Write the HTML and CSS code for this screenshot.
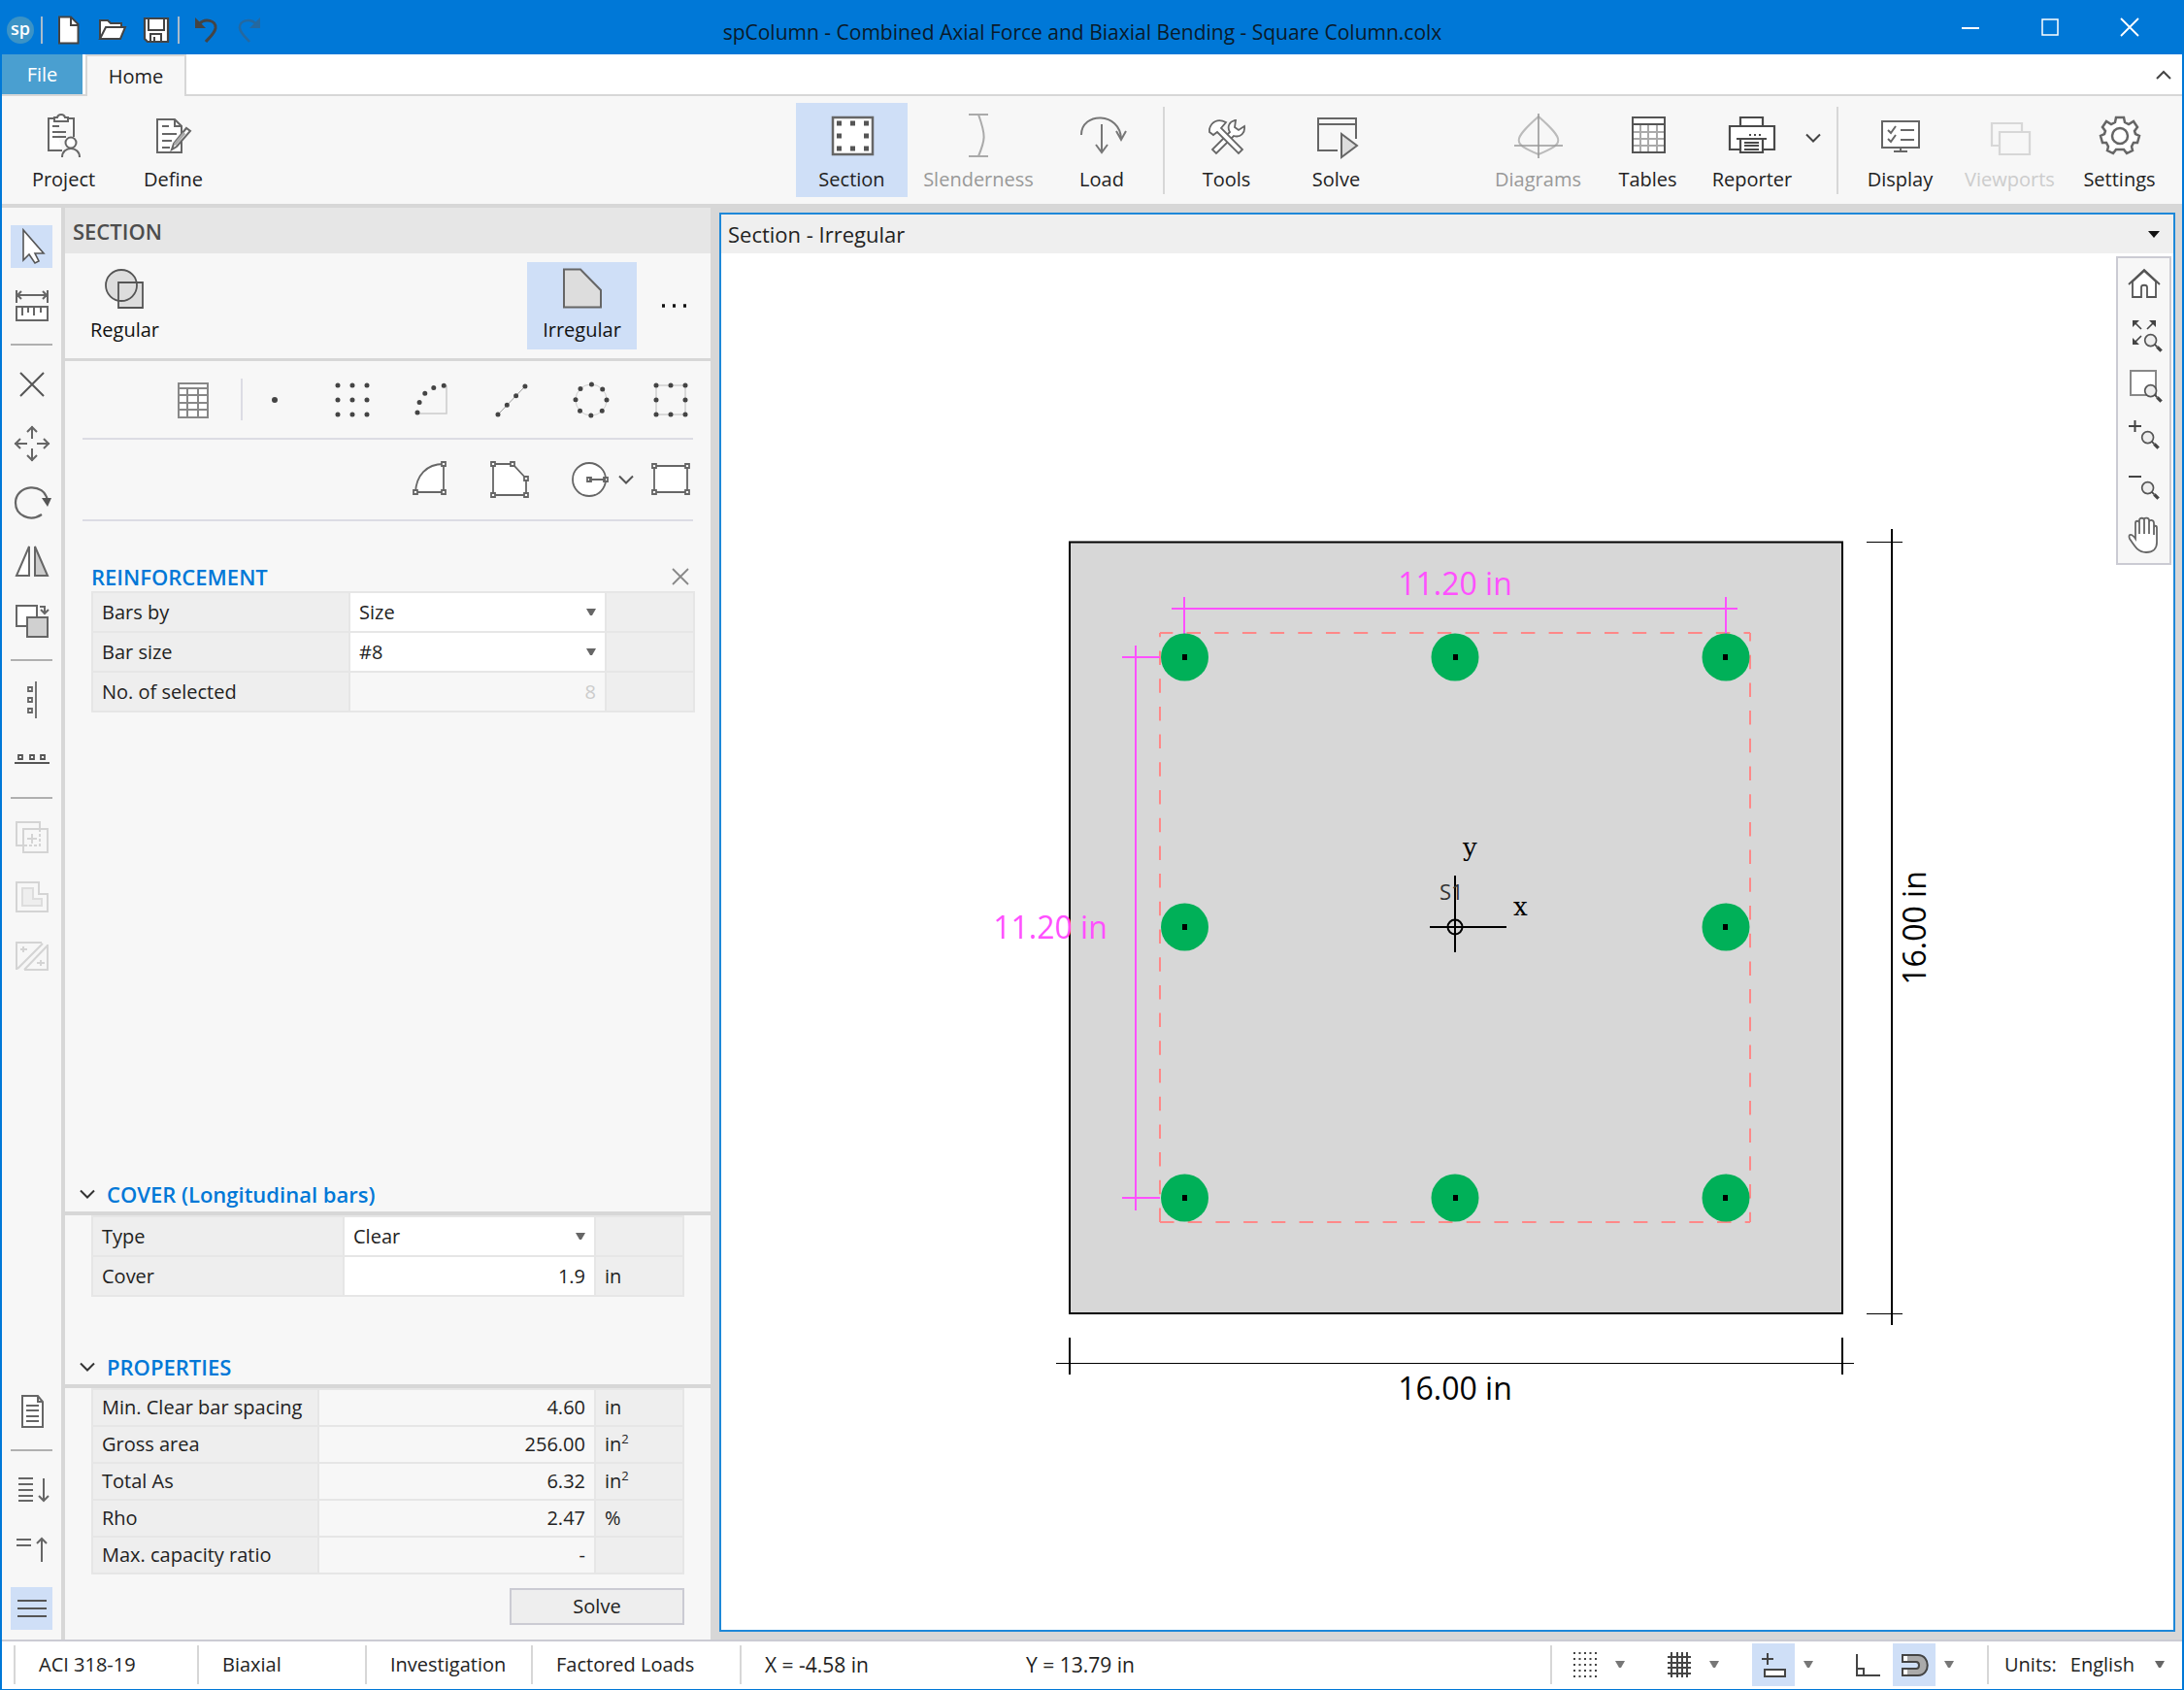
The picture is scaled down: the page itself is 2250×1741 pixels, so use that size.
FILE: index.html
```html
<!DOCTYPE html>
<html lang="en">
<head>
<meta charset="utf-8">
<meta name="viewport" content="width=device-width, initial-scale=1">
<title>spColumn - Square Column.colx</title>
<link rel="stylesheet" href="styles.css">
</head>
<body>
<svg class="defs" width="0" height="0" aria-hidden="true">
  <symbol id="caret" viewBox="0 0 10 7"><path d="M0 0H10L6 7H4Z" fill="currentColor"/></symbol>
  <symbol id="chevron" viewBox="0 0 16 10"><path d="M1 1.500L8 8.500L15 1.500" fill="none" stroke="currentColor" stroke-width="2"/></symbol>
  <symbol id="glass" viewBox="0 0 26 26"><circle cx="9" cy="9" r="7" fill="#eee" stroke="#555" stroke-width="2"/><path d="M14 14L17 17" stroke="#444" stroke-width="2"/><path d="M17 17L22 22" stroke="#444" stroke-width="4"/></symbol>
</svg>
<div class="window">
  <header class="titlebar">
    <span class="logo">sp</span>
    <i class="bar-sep"></i>
    <button class="quick" aria-label="New"><svg width="24" height="30"><path d="M2 1.500H14L21.500 9V28.500H2Z" fill="#fff" stroke="#444" stroke-width="2"/><path d="M14 2V10H21" fill="none" stroke="#444" stroke-width="2"/></svg></button>
    <button class="quick" aria-label="Open"><svg width="30" height="24"><path d="M2 20V2H10L13 5H24V9" fill="#fff" stroke="#444" stroke-width="2"/><path d="M2 21L8 9H28L23 21Z" fill="#fff" stroke="#444" stroke-width="2"/></svg></button>
    <button class="quick" aria-label="Save"><svg width="28" height="28"><path d="M2 2H26V26H5L2 23Z" fill="#fff" stroke="#444" stroke-width="2.200"/><path d="M6 2V14H22V2M8 26V18H19V26M12 21V26" fill="none" stroke="#444" stroke-width="2"/></svg></button>
    <i class="bar-sep"></i>
    <button class="quick" aria-label="Undo"><svg width="26" height="28"><path d="M2 1V12H13Z" fill="#444"/><path d="M6 8C12 1 24 4 23 12C22 18 16 22 13 26" fill="none" stroke="#444" stroke-width="3"/></svg></button>
    <button class="quick" aria-label="Redo" disabled><svg width="26" height="28"><path d="M24 1V12H13Z" fill="#25689f"/><path d="M20 8C14 1 2 4 3 12C4 18 10 22 13 26" fill="none" stroke="#25689f" stroke-width="2.500"/></svg></button>
    <h1 class="title">spColumn - Combined Axial Force and Biaxial Bending - Square Column.colx</h1>
    <button class="sys" aria-label="Minimize"><svg width="20" height="20"><path d="M1 11H19" stroke="#fff" stroke-width="2"/></svg></button>
    <button class="sys" aria-label="Maximize"><svg width="20" height="20"><path d="M2 2H18V18H2Z" fill="none" stroke="#fff" stroke-width="1.500"/></svg></button>
    <button class="sys" aria-label="Close"><svg width="20" height="20"><path d="M1 1L19 19M19 1L1 19" stroke="#fff" stroke-width="1.800"/></svg></button>
  </header>

  <nav class="tabs">
    <button class="tab tab-file">File</button>
    <button class="tab tab-home">Home</button>
    <button class="collapse" aria-label="Collapse ribbon"><svg width="16" height="10"><path d="M1 9L8 2L15 9" fill="none" stroke="#444" stroke-width="2"/></svg></button>
  </nav>

  <div class="ribbon">
    <div class="group">
      <button class="cmd"><svg width="48" height="48" fill="none" stroke="#666" stroke-width="2"><path d="M13 6H8V39H22M28 6H34V25" fill="#fff"/><path d="M14 9V5H17C18 1 24 1 25 5H28V9Z" fill="#fff"/><path d="M12 14H19M12 20H26M12 25H26"/><circle cx="31" cy="31" r="5.500" fill="#fff"/><path d="M22 46C22 34 40 34 40 46"/></svg><span>Project</span></button>
      <button class="cmd"><svg width="48" height="48" fill="none" stroke="#666" stroke-width="2"><path d="M7 7H25L32 14V41H7Z" fill="#fff"/><path d="M25 7V14H32M12 14H19M12 22H27M12 29H22M12 36H20"/><path d="M24 32L37 16L41 19L27 35L22 38Z" fill="#fff"/><path d="M25 33L35 21" stroke="#aaa" stroke-width="3"/></svg><span>Define</span></button>
    </div>
    <div class="group group-main">
      <button class="cmd active"><svg width="48" height="48"><path d="M4 5H45V43H4Z" fill="#fff" stroke="#666" stroke-width="2.500"/><path d="M8 11h5M22 11h5M36 11h5M8 24h5M36 24h5M8 37h5M22 37h5M36 37h5" stroke="#555" stroke-width="5"/></svg><span>Section</span></button>
      <button class="cmd wide" disabled><svg width="48" height="48" fill="none" stroke="#aaa" stroke-width="2"><path d="M14 2H34M14 45H34M24 2C32 24 31 28 24 45"/></svg><span>Slenderness</span></button>
      <button class="cmd mid"><svg width="48" height="48" fill="none" stroke="#777" stroke-width="2"><path d="M3 23C3 -1 43 -1 44 27M39 19L44 28L49 19M24 12V41M18 33L24 41L30 33"/></svg><span>Load</span></button>
      <i class="rib-sep"></i>
      <button class="cmd"><svg width="48" height="48" fill="#fff" stroke="#666" stroke-width="1.800"><path d="M33 8C26 9 24 15 27 20L9 38L13 42L31 24C38 26 43 21 42 14L36 18L32 15Z"/><path d="M6 17C8 9 15 6 23 10L18 16L40 38L36 42L14 20L10 23L6 20Z"/></svg><span>Tools</span></button>
      <button class="cmd"><svg width="48" height="48" fill="none" stroke="#666" stroke-width="2"><path d="M25 39H5V6H44V27M5 12H44"/><path d="M29 22V46L45 34Z" fill="#ddd"/></svg><span>Solve</span></button>
    </div>
    <div class="group group-out">
      <button class="cmd" disabled><svg width="50" height="48" fill="none" stroke="#999" stroke-width="1.600"><path d="M25 4C-2 28 -2 32 25 43C52 32 52 28 25 4Z" stroke="#bbb" stroke-width="2"/><path d="M0 34H50M25 1V47"/></svg><span>Diagrams</span></button>
      <button class="cmd"><svg width="48" height="48" fill="none" stroke="#aaa" stroke-width="2"><path d="M8 5H41V41H8Z" fill="#fff"/><path d="M8 20H41M8 27H41M8 34H41M16 12V41M24 12V41M33 12V41"/><path d="M8 5H41V41H8ZM8 12H41" stroke="#555"/></svg><span>Tables</span></button>
      <button class="cmd short"><svg width="48" height="48" fill="#fff" stroke="#4a4a4a" stroke-width="2.200"><path d="M12 14V5H35V14"/><path d="M1 14H47V38H1Z"/><path d="M12 26V41H35V26"/><path d="M8 27H39M16 31H31M16 34H31M16 38H31" stroke-width="1.800"/><path d="M21 23h2M26 23h2M31 23h2" stroke-width="2"/></svg><span>Reporter</span></button>
      <button class="drop" aria-label="Reporter options"><svg width="16" height="10"><use href="#chevron"/></svg></button>
      <i class="rib-sep"></i>
      <button class="cmd"><svg width="48" height="48" fill="none" stroke="#666" stroke-width="2"><path d="M5 9H43V36H5Z" fill="#fff"/><path d="M24 36V40M17 40H31M11 18L14 21L19 14M11 27L14 30L19 23M24 18H38M24 28H38"/></svg><span>Display</span></button>
      <button class="cmd ghost" disabled><svg width="48" height="48" fill="#f7f7f7" stroke="#d7d7d7" stroke-width="2.200"><path d="M5 11H36V34H5Z"/><path d="M13 20H44V43H13Z"/></svg><span>Viewports</span></button>
      <button class="cmd"><svg width="48" height="48" fill="none" stroke="#666" stroke-width="2.500"><path d="M20 5H28L29 10L33 12L38 9L42 15L39 19L40 22L44 24L42 31L38 31L36 35L37 39L31 42L28 38H24H20L17 42L11 39L12 35L10 31L6 31L4 24L8 22L9 19L6 15L10 9L15 12L19 10Z" fill="#fff"/><circle cx="24" cy="24" r="8"/></svg><span>Settings</span></button>
    </div>
  </div>

  <main class="body">
    <aside class="side" aria-label="Edit tools">
      <button class="tool active" aria-label="Select"><svg width="40" height="40" fill="#fff" stroke="#555" stroke-width="1.600"><path d="M11 3V34L17 28L23 37L27 35L23 27H32Z"/></svg></button>
      <button class="tool" aria-label="Measure"><svg width="40" height="40" fill="none" stroke="#666" stroke-width="2"><path d="M4 4V17M36 4V17M4 9H36M9 5L5 9L9 13M31 5L35 9L31 13"/><path d="M4 21H36V35H4Z" fill="#fff"/><path d="M10 21V30M16 21V27M22 21V30M29 21V27"/></svg></button>
      <i class="side-sep"></i>
      <button class="tool" aria-label="Delete"><svg width="40" height="40" stroke="#555" stroke-width="2"><path d="M8 8L32 32M32 8L8 32"/></svg></button>
      <button class="tool" aria-label="Move"><svg width="40" height="40" fill="none" stroke="#666" stroke-width="2"><path d="M20 2V15M15 8L20 3L25 8M20 38V25M15 32L20 37L25 32M2 20H15M8 15L3 20L8 25M38 20H25M32 15L37 20L32 25"/></svg></button>
      <button class="tool" aria-label="Rotate"><svg width="40" height="40"><path d="M30 32C18 40 3 33 3 20C3 1 33 -2 36 18" fill="none" stroke="#666" stroke-width="2.200"/><path d="M30 15H40L36 24Z" fill="#555"/></svg></button>
      <button class="tool" aria-label="Mirror"><svg width="40" height="40" stroke="#666" stroke-width="2"><path d="M17 4V34H4Z" fill="#fff"/><path d="M23 4V34H36Z" fill="#ccc"/></svg></button>
      <button class="tool" aria-label="Duplicate"><svg width="40" height="40" stroke="#666" stroke-width="2"><path d="M4 4H25V25H4Z" fill="#fff"/><path d="M15 16H36V36H15Z" fill="#d0d0d0"/><path d="M28 5H33V11M29 8L33 12L37 8" fill="none"/></svg></button>
      <i class="side-sep"></i>
      <button class="tool" aria-label="Align vertically"><svg width="40" height="40" fill="#fff" stroke="#666" stroke-width="1.800"><path d="M24 1V39M16 7h4v4h-4zM16 18h4v4h-4zM16 29h4v4h-4z"/></svg></button>
      <button class="tool" aria-label="Align horizontally"><svg width="40" height="40" fill="#fff" stroke="#555" stroke-width="1.800"><path d="M2 24H38M6 16h4v4h-4zM18 16h4v4h-4zM29 16h4v4h-4z"/></svg></button>
      <i class="side-sep"></i>
      <button class="tool" aria-label="Union" disabled><svg width="40" height="40" fill="none" stroke="#d4d4d4" stroke-width="2"><path d="M11 28H4V4H28V11M11 11H36V35H11Z"/><path d="M28 11V28H11" stroke-dasharray="3 2"/><path d="M15 21H25M20 16V26"/></svg></button>
      <button class="tool" aria-label="Offset" disabled><svg width="40" height="40" fill="none" stroke="#d4d4d4" stroke-width="2"><path d="M4 5H27V17H36V35H4Z"/><path d="M10 11H21V22H30V29H10Z" fill="#eee" stroke="#ddd"/></svg></button>
      <button class="tool" aria-label="Split" disabled><svg width="40" height="40" fill="none" stroke="#d4d4d4" stroke-width="2"><path d="M4 34V6H30M36 8V34H12M5 33L31 7M12 34L36 9M8 13H15M11 10V16M25 27H33M29 24V30"/></svg></button>
      <div class="side-gap"></div>
      <button class="tool" aria-label="Report"><svg width="40" height="40" fill="none" stroke="#666" stroke-width="2"><path d="M10 4H26L31 10V36H10Z" fill="#fff"/><path d="M14 14H27M14 19H27M14 25H27M14 30H27M26 4V10H31"/></svg></button>
      <i class="side-sep"></i>
      <button class="tool" aria-label="Sort down"><svg width="40" height="40" fill="none" stroke="#666" stroke-width="2"><path d="M6 8H21M6 14H21M6 20H21M6 26H21M6 31H21M32 8V31M27 26L32 31L37 26"/></svg></button>
      <button class="tool" aria-label="Sort up"><svg width="40" height="40" fill="none" stroke="#666" stroke-width="2"><path d="M4 10H19M4 16H19M30 9V33M25 14L30 9L35 14"/></svg></button>
      <button class="tool active" aria-label="Show panel"><svg width="40" height="40" stroke="#555" stroke-width="2"><path d="M5 12H35M5 20H35M5 28H35"/></svg></button>
    </aside>

    <section class="panel">
      <h2 class="panel-head">SECTION</h2>
      <div class="kinds">
        <button class="kind"><svg width="40" height="42" stroke="#555" stroke-width="1.800"><path d="M13 15H38V41H13Z" fill="#ddd"/><circle cx="16" cy="18" r="16" fill="#ddd"/><path d="M13 33V15H31" fill="none"/></svg><span>Regular</span></button>
        <button class="kind active"><svg width="40" height="42"><path d="M1 1.500H18L39 23V40.500H1Z" fill="#ddd" stroke="#666" stroke-width="2"/></svg><span>Irregular</span></button>
        <button class="more" aria-label="More"><svg width="28" height="6"><path d="M1 3h3M12 3h3M23 3h3" stroke="#111" stroke-width="3.500"/></svg></button>
      </div>
      <div class="shapes">
        <button class="shape" aria-label="Bar table"><svg width="40" height="40" fill="none" stroke="#888" stroke-width="2"><path d="M5 3H35V38H5Z" fill="#fff"/><path d="M5 8H35M5 15H35M5 23H35M5 30H35M14 8V38M25 8V38"/></svg></button>
        <i class="shape-sep"></i>
        <button class="shape" aria-label="Single bar"><svg width="40" height="40"><circle cx="20" cy="20" r="3" fill="#444"/></svg></button>
        <button class="shape" aria-label="Bar grid"><svg width="40" height="40"><path d="M5 5H36M5 20H36M5 35H36" stroke="#444" stroke-width="5" stroke-linecap="round" stroke-dasharray="0 15"/></svg></button>
        <button class="shape" aria-label="Bar arc"><svg width="40" height="40"><path d="M5 34H35V5" fill="none" stroke="#ccc" stroke-width="1.500"/><path d="M5 33C6 16 16 6 34 5" fill="none" stroke="#444" stroke-width="5" stroke-linecap="round" stroke-dasharray="0 10.800"/></svg></button>
        <button class="shape" aria-label="Bar line"><svg width="40" height="40"><path d="M6 35L34 6" stroke="#999"/><path d="M6 35L34 6" stroke="#444" stroke-width="5" stroke-linecap="round" stroke-dasharray="0 13.400"/></svg></button>
        <button class="shape" aria-label="Bar circle"><svg width="40" height="40" fill="none"><circle cx="20" cy="20" r="16" stroke="#ccc"/><circle cx="20" cy="20" r="16" stroke="#444" stroke-width="5" stroke-linecap="round" stroke-dasharray="0 12.566"/></svg></button>
        <button class="shape" aria-label="Bar rectangle"><svg width="40" height="40" fill="none"><path d="M5 5H35V35H5Z" stroke="#bbb"/><path d="M5 5H35V35H5Z" stroke="#444" stroke-width="5" stroke-linecap="round" stroke-dasharray="0 15"/></svg></button>
      </div>
      <div class="shapes">
        <button class="shape" aria-label="Arc solid"><svg width="40" height="40" fill="#fff" stroke="#666" stroke-width="1.800"><path d="M5 33C6 16 16 4 34 4V33Z"/><path d="M3 31h4v4h-4zM32 31h4v4h-4zM32 2h4v4h-4z"/></svg></button>
        <button class="shape" aria-label="Polygon solid"><svg width="40" height="40" fill="#fff" stroke="#666" stroke-width="1.800"><path d="M3 4H23L37 19V36H3Z"/><path d="M1 2h4v4h-4zM21 2h4v4h-4zM35 17h4v4h-4zM35 34h4v4h-4zM1 34h4v4h-4z"/></svg></button>
        <button class="shape pick" aria-label="Circle solid"><svg width="40" height="40" fill="#fff" stroke="#666" stroke-width="1.800"><circle cx="20" cy="20" r="17"/><path d="M20 20H37M18 18h4v4h-4zM35 18h4v4h-4z"/></svg></button>
        <button class="shape-drop" aria-label="Circle options"><svg width="16" height="10"><use href="#chevron"/></svg></button>
        <button class="shape last" aria-label="Rectangle solid"><svg width="40" height="40" fill="#fff" stroke="#666" stroke-width="1.800"><path d="M3 6H37V33H3Z"/><path d="M1 4h4v4h-4zM35 4h4v4h-4zM35 31h4v4h-4zM1 31h4v4h-4z"/></svg></button>
      </div>

      <div class="block reinforcement">
        <div class="block-head"><h3>REINFORCEMENT</h3><button class="close" aria-label="Close reinforcement"><svg width="18" height="18"><path d="M1 1L17 17M17 1L1 17" stroke="#888" stroke-width="1.800"/></svg></button></div>
        <table class="grid grid-r">
          <tr><th><label for="by">Bars by</label></th><td class="field"><div class="pickbox"><select id="by"><option>Size</option></select><svg width="10" height="7"><use href="#caret"/></svg></div></td><td class="unit"></td></tr>
          <tr><th><label for="size">Bar size</label></th><td class="field"><div class="pickbox"><select id="size"><option>#8</option></select><svg width="10" height="7"><use href="#caret"/></svg></div></td><td class="unit"></td></tr>
          <tr><th><label for="sel">No. of selected</label></th><td><input id="sel" value="8" disabled></td><td class="unit"></td></tr>
        </table>
      </div>

      <div class="panel-gap"></div>

      <h3 class="fold"><svg width="16" height="10"><use href="#chevron"/></svg>COVER (Longitudinal bars)</h3>
      <div class="block">
        <table class="grid grid-c">
          <tr><th><label for="type">Type</label></th><td class="field"><div class="pickbox"><select id="type"><option>Clear</option></select><svg width="10" height="7"><use href="#caret"/></svg></div></td><td class="unit"></td></tr>
          <tr><th><label for="cover">Cover</label></th><td class="field"><input id="cover" value="1.9"></td><td class="unit">in</td></tr>
        </table>
      </div>

      <h3 class="fold fold-next"><svg width="16" height="10"><use href="#chevron"/></svg>PROPERTIES</h3>
      <div class="block">
        <table class="grid grid-p">
          <tr><th>Min. Clear bar spacing</th><td>4.60</td><td class="unit">in</td></tr>
          <tr><th>Gross area</th><td>256.00</td><td class="unit">in<sup>2</sup></td></tr>
          <tr><th>Total As</th><td>6.32</td><td class="unit">in<sup>2</sup></td></tr>
          <tr><th>Rho</th><td>2.47</td><td class="unit">%</td></tr>
          <tr><th>Max. capacity ratio</th><td>-</td><td class="unit"></td></tr>
        </table>
        <button class="solve">Solve</button>
      </div>
    </section>

    <section class="view">
      <header class="view-head"><h2>Section - Irregular</h2><button class="view-menu" aria-label="View menu"><svg width="12" height="7"><path d="M0 0H12L6 7Z" fill="#111"/></svg></button></header>
      <div class="canvas">
        <svg class="drawing" viewBox="743 261 1496 1418" font-family="'Open Sans', 'Noto Sans', sans-serif">
          <path d="M1102 558.500H1898V1353H1102Z" fill="#d7d7d7" stroke="#000" stroke-width="2"/>
          <g fill="none" stroke="#f88" stroke-width="2" stroke-dasharray="14.500 14.200">
            <path d="M1803 652H1195" stroke-dashoffset="8"/><path d="M1195 1259V652"/><path d="M1803 652V1259" stroke-dashoffset="6"/><path d="M1195 1259H1803"/>
          </g>
          <g stroke="#ff50ff" stroke-width="2">
            <path d="M1207 627H1790M1220 615V653M1778 615V653M1170 665V1247M1156 677H1195M1156 1234H1195"/>
          </g>
          <g fill="#00b058">
            <circle cx="1220.500" cy="677" r="24.500"/><circle cx="1499" cy="677" r="24.500"/><circle cx="1778" cy="677" r="24.500"/>
            <circle cx="1220.500" cy="955" r="24.500"/><circle cx="1778" cy="955" r="24.500"/>
            <circle cx="1220.500" cy="1234" r="24.500"/><circle cx="1499" cy="1234" r="24.500"/><circle cx="1778" cy="1234" r="24.500"/>
          </g>
          <path d="M1218 677h5M1497 677h5M1775 677h5M1218 955h5M1775 955h5M1218 1234h5M1497 1234h5M1775 1234h5" stroke="#000" stroke-width="6"/>
          <g fill="none" stroke="#000" stroke-width="2">
            <path d="M1499 902V981M1473 955H1552"/><circle cx="1499" cy="955" r="7.500"/>
            <path d="M1949 545V1365M1102 1378V1416M1898 1378V1416"/>
            <path d="M1088 1404.500H1910M1923 558.500H1960M1923 1353.500H1960" stroke-width="1"/>
          </g>
          <g font-size="32" text-anchor="middle">
            <g fill="#ff50ff"><text x="1499" y="613">11.20 in</text><text x="1082" y="967">11.20 in</text></g>
            <text x="1499" y="1442">16.00 in</text>
            <text transform="translate(1984 956) rotate(-90)">16.00 in</text>
          </g>
          <text x="1483" y="927" font-size="22" fill="#333">S1</text>
          <g font-family="'DejaVu Serif', serif" font-size="26"><text x="1507" y="882">y</text><text x="1559" y="943">x</text></g>
        </svg>
        <div class="zoombox">
          <button aria-label="Home view"><svg width="36" height="36" fill="none" stroke="#555" stroke-width="1.800"><path d="M2 19L18 4L34 19"/><path d="M6 16V32H15V22C15 19 21 19 21 22V32H30V16L18 5Z" fill="#fff"/></svg></button>
          <button aria-label="Zoom extents"><svg width="36" height="36" fill="none" stroke="#444" stroke-width="1.600"><path d="M8 6L15 13M28 6L21 13M8 27L15 20"/><path d="M6 4H13L6 11ZM30 4H23L30 11ZM6 29H13L6 22Z" fill="#444" stroke="none"/><use href="#glass" x="17" y="17" width="22" height="22"/></svg></button>
          <button aria-label="Zoom window"><svg width="36" height="36"><path d="M4 4H30V29H4Z" fill="#fff" stroke="#888" stroke-width="2"/><use href="#glass" x="17" y="17" width="22" height="22"/></svg></button>
          <button aria-label="Zoom in"><svg width="36" height="36"><path d="M2 9H15M8.500 3V15" stroke="#444" stroke-width="2"/><use href="#glass" x="14" y="13" width="22" height="22"/></svg></button>
          <button aria-label="Zoom out"><svg width="36" height="36"><path d="M2 9H15" stroke="#444" stroke-width="2"/><use href="#glass" x="14" y="13" width="22" height="22"/></svg></button>
          <button aria-label="Pan"><svg width="36" height="40" fill="#fff" stroke="#666" stroke-width="1.800"><path d="M9 20V7C9 4 13 4 13 7V4C13 1 18 1 18 4V3C18 1 23 1 23 4V6C23 3 28 3 28 7V12C28 9 31 9 31 12V27C31 33 27 37 20 37C12 37 9 32 3 23C1 18 5 17 9 23ZM13 7V18M18 4V18M23 6V18M28 9V19"/></svg></button>
        </div>
      </div>
    </section>
  </main>

  <footer class="status">
    <span class="cell c-code">ACI 318-19</span>
    <span class="cell c-axis">Biaxial</span>
    <span class="cell c-mode">Investigation</span>
    <span class="cell c-load">Factored Loads</span>
    <span class="cell c-x">X = -4.58 in</span>
    <span class="c-y">Y = 13.79 in</span>
    <div class="snaps">
      <button class="snap" aria-label="Grid dots"><svg width="28" height="28"><path d="M2 2H26M2 8H26M2 14H26M2 20H26M2 26H26" stroke="#444" stroke-width="2" stroke-dasharray="2 3.500"/></svg></button>
      <button class="snap-drop" aria-label="Grid dots options"><svg width="10" height="7"><use href="#caret"/></svg></button>
      <button class="snap" aria-label="Grid lines"><svg width="28" height="28"><path d="M2 6H26M2 12H26M2 17H26M2 23H26M6 1V27M12 1V27M17 1V27M22 1V27" stroke="#444" stroke-width="2"/></svg></button>
      <button class="snap-drop" aria-label="Grid lines options"><svg width="10" height="7"><use href="#caret"/></svg></button>
      <button class="snap active" aria-label="Dynamic input"><svg width="28" height="28" fill="none" stroke="#444" stroke-width="2"><path d="M2 8H14M8 2V14"/><path d="M5 19H26V26H5Z" fill="#fff"/></svg></button>
      <button class="snap-drop" aria-label="Dynamic input options"><svg width="10" height="7"><use href="#caret"/></svg></button>
      <button class="snap" aria-label="Orthogonal"><svg width="28" height="28" fill="none" stroke="#444" stroke-width="2"><path d="M3 3V25H27M3 18H10V25"/></svg></button>
      <button class="snap active" aria-label="Object snap"><svg width="28" height="28"><path d="M2 4H18C31 4 31 25 18 25H2V18H16C20 18 20 11 16 11H2Z" fill="#aaa" stroke="#444" stroke-width="2"/><path d="M3 5h4v5h-4zM3 19h4v5h-4z" fill="#fff"/></svg></button>
      <button class="snap-drop" aria-label="Object snap options"><svg width="10" height="7"><use href="#caret"/></svg></button>
    </div>
    <div class="units"><label for="units">Units:</label><div class="pickbox"><select id="units"><option>English</option></select><svg width="10" height="7"><use href="#caret"/></svg></div></div>
  </footer>
</div>
</body>
</html>
```
FILE: styles.css
```css
* { box-sizing: border-box; }

body {
  margin: 0;
  font-family: "Open Sans", "Noto Sans", sans-serif;
  font-size: 20px;
  line-height: 28px;
  color: #222;
  background: #fff;
}

button, input, select {
  font: inherit;
  color: inherit;
  margin: 0;
  padding: 0;
  border: 0;
  border-radius: 0;
  background: none;
  appearance: none;
}

h1, h2, h3 { margin: 0; font-size: 22px; font-weight: 400; }
svg { display: block; flex: none; overflow: visible; }
.defs { position: absolute; }

.window {
  display: flex;
  flex-direction: column;
  min-height: 100vh;
  border: solid #0078d7;
  border-width: 0 2px 3px;
}

/* Title bar */
.titlebar {
  display: flex;
  align-items: center;
  height: 56px;
  padding: 5px 13px 0 5px;
  background: #0078d7;
}
.logo {
  width: 28px;
  height: 28px;
  margin-right: 7px;
  border-radius: 50%;
  background: #3b93c6;
  color: #fff;
  font-size: 18px;
  font-weight: 600;
  line-height: 24px;
  text-align: center;
}
.bar-sep { width: 2px; height: 28px; background: #a9bccb; }
.quick { display: flex; justify-content: center; width: 45px; }
.bar-sep + .quick { margin-left: 4px; }
.title { flex: 1; padding: 4px 38px 0 0; text-align: center; color: #0a1a2a; white-space: nowrap; font-size: 21px; }
.sys { display: flex; justify-content: center; width: 82px; margin-top: -5px; }

/* Ribbon tabs */
.tabs { display: flex; height: 43px; border-bottom: 2px solid #d7d7d7; }
.tab { height: 41px; }
.tab-file { width: 83px; margin-right: 3px; background: #4a9fd0; color: #fff; }
.tab-home { width: 104px; height: 43px; border: 2px solid #d7d7d7; border-bottom: 0; background: #f7f7f7; }
.collapse { margin-left: auto; padding: 0 11px; color: #444; }

/* Ribbon */
.ribbon {
  display: flex;
  height: 111px;
  padding: 7px 8px 0 7px;
  background: #f7f7f7;
}
.group { display: flex; }
.group-main { margin-left: auto; }
.group-out { margin-left: 95px; }
.cmd {
  display: flex;
  flex-direction: column;
  align-items: center;
  gap: 7px;
  width: 113px;
  height: 97px;
  padding-top: 10px;
}
.cmd:disabled { color: #999; }
.cmd.ghost { color: #ccc; }
.active { background: #cfdff7; }
.group-main .active { width: 115px; }
.wide { width: 146px; }
.mid { width: 108px; }
.short { width: 102px; }
.drop { width: 27px; height: 72px; padding-left: 4px; color: #444; }
.rib-sep { width: 2px; height: 90px; margin: 4px 7px 0 9px; background: #d7d7d7; }

/* Body */
.body {
  flex: 1;
  display: flex;
  padding: 4px 7px 0 0;
  background: #d7d7d7;
}
.side {
  display: flex;
  flex-direction: column;
  align-items: center;
  gap: 17px;
  width: 61px;
  margin-right: 4px;
  padding: 18px 0 10px;
  background: #f7f7f7;
}
.tool { display: flex; align-items: center; justify-content: center; width: 43px; height: 44px; flex: none; }
.side-sep { width: 43px; height: 2px; margin-bottom: 1px; background: #b0b0b0; flex: none; }
.side-gap { flex: 1; }

/* Section panel */
.panel {
  display: flex;
  flex-direction: column;
  width: 665px;
  flex: none;
  background: #f7f7f7;
}
.panel-head { height: 47px; padding: 10px 8px; background: #e6e6e6; color: #4d4d4d; font-weight: 600; }
.kinds { display: flex; height: 111px; padding: 9px 5px 0; border-bottom: 3px solid #d7d7d7; color: #111; }
.kind {
  display: flex;
  flex-direction: column;
  align-items: center;
  gap: 8px;
  width: 113px;
  height: 90px;
  padding-top: 6px;
}
.kind.active { margin-left: auto; }
.more { width: 71px; height: 90px; padding-left: 25px; }
.shapes {
  display: flex;
  align-items: center;
  justify-content: flex-end;
  height: 81px;
  margin: 0 18px;
  border-bottom: 2px solid #dcdce4;
}
.shapes + .shapes { height: 84px; }
.shape { display: flex; justify-content: center; width: 82px; }
.shape:last-child { width: 47px; margin-left: 17px; }
.shape-sep { width: 2px; height: 43px; margin: 0 6px 0 8px; background: #dcdce4; }
.shapes .shape-sep + .shape { width: 54px; margin-right: 12px; }
.shape.pick { width: 60px; margin-left: 11px; }
.shape-drop { width: 22px; color: #555; }
.shape.last { margin-left: 8px; }

.block { padding: 0 27px; }
.reinforcement { padding: 42px 16px 0 27px; }
.block-head { display: flex; align-items: center; justify-content: space-between; padding: 0 6px 0 0; height: 30px; }
h3 { color: #0078d7; font-weight: 600; }

.grid { width: 100%; border-collapse: collapse; table-layout: fixed; background: #f7f7f7; }
.grid th, .grid td { height: 41px; padding: 0 9px; border: 2px solid #e6e6e6; text-align: right; font-weight: 400; }
.grid th { text-align: left; background: #eee; white-space: nowrap; }
.grid th, .grid .unit { background: #eee; }
.grid .unit { width: 91px; text-align: left; }
.grid .field { background: #fff; }
.grid-r th { width: 265px; }
.grid-c th { width: 259px; }
.grid-p th { width: 233px; }
.grid-p th, .grid-p td { height: 38px; line-height: 24px; }
.grid input { display: block; width: 100%; text-align: right; }
.grid input:disabled { color: #ccc; }
.grid sup { font-size: 13px; line-height: 0; }
.pickbox { display: flex; align-items: center; color: #666; }
.pickbox select { flex: 1; color: #222; }

.panel-gap { flex: 1; }
.fold {
  display: flex;
  align-items: center;
  gap: 12px;
  height: 40px;
  padding-left: 15px;
  border-bottom: 4px solid #d7d7d7;
}
.fold svg { color: #333; }
.fold-next { margin-top: 54px; }
.solve {
  display: block;
  width: 180px;
  height: 38px;
  margin: 14px 0 15px auto;
  border: 2px solid #cbcbd3;
  background: #eee;
}

/* Drawing view */
.view {
  flex: 1;
  display: flex;
  flex-direction: column;
  min-width: 0;
  margin: 5px 0 8px 9px;
  border: 2px solid #1e88d8;
  background: #fff;
}
.view-head { display: flex; align-items: center; justify-content: space-between; height: 40px; padding: 0 14px 0 7px; background: #efefef; }
.canvas { flex: 1; display: flex; position: relative; min-height: 0; }
.drawing { flex: 1; width: 100%; min-width: 0; }
.zoombox {
  position: absolute;
  top: 3px;
  right: 2px;
  display: flex;
  flex-direction: column;
  width: 57px;
  padding-bottom: 2px;
  border: 2px solid #cbcbd3;
  background: #f7f7f7;
}
.zoombox button { display: flex; align-items: center; justify-content: center; height: 52px; }

/* Status bar */
.status {
  display: flex;
  align-items: center;
  height: 51px;
  padding: 0 0 2px 12px;
  border-top: 2px solid #cbcbd3;
  background: #fff;
}
.cell { height: 40px; padding: 6px 0 0 24px; border-left: 2px solid #d7d7d7; white-space: nowrap; }
.c-code { width: 189px; }
.c-axis { width: 173px; }
.c-mode { width: 171px; }
.c-load { width: 215px; }
.c-x { width: 295px; }
.c-x, .c-y { font-size: 21px; white-space: nowrap; }
.snaps { display: flex; align-items: center; height: 40px; margin-left: auto; padding-left: 12px; border-left: 2px solid #d7d7d7; }
.snap { display: flex; align-items: center; justify-content: center; width: 44px; height: 44px; }
.snap-drop { width: 28px; margin-right: 25px; padding-left: 9px; color: #777; }
.snap-drop + .snap:nth-child(7) { margin-right: 4px; }
.units { display: flex; align-items: center; gap: 14px; height: 40px; width: 201px; padding: 0 18px 0 16px; border-left: 2px solid #d7d7d7; }
.units .pickbox { flex: 1; }
```
